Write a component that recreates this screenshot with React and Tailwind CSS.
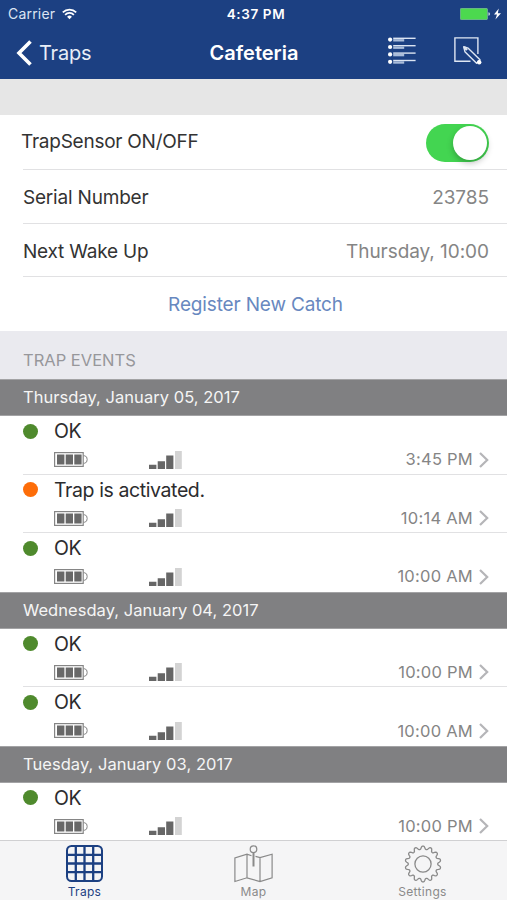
import React from "react";
import clsx from "clsx";

const details = [
  { label: "Serial Number", value: "23785" },
  { label: "Next Wake Up", value: "Thursday, 10:00" },
];

const eventDays = [
  {
    date: "Thursday, January 05, 2017",
    events: [
      { title: "OK", time: "3:45 PM" },
      { title: "Trap is activated.", time: "10:14 AM", activated: true },
      { title: "OK", time: "10:00 AM" },
    ],
  },
  {
    date: "Wednesday, January 04, 2017",
    events: [
      { title: "OK", time: "10:00 PM" },
      { title: "OK", time: "10:00 AM" },
    ],
  },
  {
    date: "Tuesday, January 03, 2017",
    events: [{ title: "OK", time: "10:00 PM" }],
  },
];

const WifiIcon = () => (
  <svg className="w-[15px] h-3" viewBox="0 0 15 12" fill="none" stroke="white" strokeWidth="1.7">
    <path d="M.8 4.3a9.5 9.5 0 0113.4 0M3.1 6.8a6.2 6.2 0 018.8 0" />
    <path d="M7.5 11.2L5.1 8.8a3.4 3.4 0 014.8 0z" fill="white" stroke="none" />
  </svg>
);

const BatteryChargingIcon = () => (
  <svg className="w-[42px] h-3" viewBox="0 0 42 12">
    <rect x=".3" y=".3" width="27.2" height="11.4" rx="1.2" fill="#4cd94f" stroke="#a0bfc0" strokeWidth=".5" />
    <path d="M28.4 4.2q1.7.3 1.7 1.8t-1.7 1.8z" fill="#b9d3d8" />
    <path d="M38.8 0.4L34 6.6h3L35.4 11.6 41 5.3h-3.2z" fill="white" />
  </svg>
);

const ListIcon = () => (
  <svg className="w-7 h-7" viewBox="0 0 28 28">
    {[0, 7.4, 14.8, 22.2].map((y) => (
      <g key={y} transform={`translate(0 ${y})`}>
        <circle cx="2.1" cy="2.6" r="2.1" fill="white" />
        <path d="M5.2 1.3h22.4" stroke="#dbe4f2" strokeWidth="1.4" />
        <path d="M5.2 3.3h11" stroke="#a9bcda" strokeWidth="2.4" />
      </g>
    ))}
  </svg>
);

const EditIcon = () => (
  <svg className="w-7 h-7" viewBox="0 0 28 28" fill="none" stroke="#dfe7f3" strokeWidth="1.4">
    <path d="M16.5 24.2H.9V.9h23v16" />
    <path d="M9.7 9.7l1.2 5L22.6 26.2l3.4-3.4L14.2 11.2z" strokeLinejoin="round" />
    <path d="M10 10l3 3" strokeWidth="2.4" />
    <circle cx="25.2" cy="25.2" r="2.2" fill="white" stroke="none" />
  </svg>
);

const BatteryIcon = () => (
  <svg className="w-[34px] h-[15px]" viewBox="0 0 34 15" fill="none">
    <rect x=".6" y=".6" width="28.6" height="13.8" stroke="#858585" strokeWidth="1.2" />
    <path d="M29.5 3.8h1.3q2.4.4 2.4 3.7t-2.4 3.7h-1.3" stroke="#858585" />
    <path d="M3 2.6h7.4v9.8H3zM11.7 2.6H19v9.8h-7.3zM20.3 2.6h7.3v9.8h-7.3z" fill="#686868" />
  </svg>
);

const SignalIcon = () => (
  <svg className="w-[34px] h-[18px]" viewBox="0 0 34 18" fill="#666">
    <path d="M0 13.8h7.4V18H0zM8.7 10.2h7.3V18H8.7zM17.2 4.4h7.2V18h-7.2z" />
    <path d="M26 0h6.8v18H26z" fill="#d3d3d3" />
  </svg>
);

const GridIcon = () => (
  <svg className="w-[37px] h-[37px]" viewBox="0 0 37 37" fill="none" stroke="#1c4082">
    <rect x="1" y="1" width="35" height="35" rx="4.5" strokeWidth="2" />
    <path d="M9.8 1v35M18.5 1v35M27.2 1v35M1 9.8h35M1 18.5h35M1 27.2h35" strokeWidth="2.3" />
  </svg>
);

const MapIcon = () => (
  <svg className="w-[39px] h-[38px]" viewBox="0 0 39 38" fill="none" stroke="#8a8a8a" strokeWidth="1.2">
    <path d="M17.5 10.8L13 9.2.9 13v23.5L13 32.8l13 3.7 12.1-3.7V9.2L26 12.6l-4.5-1.2M13 9.2v23.6M26 12.6v23.9" />
    <circle cx="19.5" cy="4.2" r="3.3" />
    <path d="M19.5 7.5v14" strokeWidth="2" />
  </svg>
);

// 14 rounded teeth around the rim
const gearPath = Array.from({ length: 169 }, (_, i) => {
  const angle = (i / 168) * Math.PI * 2;
  const r = 16.3 + 1.7 * Math.tanh(1.6 * Math.cos(angle * 14));
  return `${i ? "L" : "M"}${(19 + r * Math.sin(angle)).toFixed(2)} ${(19 - r * Math.cos(angle)).toFixed(2)}`;
}).join("");

const GearIcon = () => (
  <svg className="w-[38px] h-[38px]" viewBox="0 0 38 38" fill="none" stroke="#8a8a8a" strokeWidth="1.3">
    <path d={gearPath} />
    <circle cx="19" cy="19" r="8.1" />
  </svg>
);

const tabs = [
  { label: "Traps", icon: GridIcon, active: true },
  { label: "Map", icon: MapIcon },
  { label: "Settings", icon: GearIcon },
];

const Header = () => (
  <header className="h-[79px] shrink-0 bg-[#1c4082] text-white">
    <div className="grid grid-cols-3 items-center h-[27px] pl-2 pr-[5px]">
      <div className="flex items-center gap-[7px] text-[14px] text-[#dbe4f3]">
        <span className="tracking-[0.2px]">Carrier</span>
        <WifiIcon />
      </div>
      <span className="text-center text-[13.5px] font-semibold tracking-[0.6px] pt-0.5 pl-0.5">4:37 PM</span>
      <div className="flex justify-end">
        <BatteryChargingIcon />
      </div>
    </div>
    <div className="grid grid-cols-3 items-center h-[51px] pl-4 pr-[25px]">
      <button className="flex items-center gap-[7px] text-[20px] tracking-[-0.2px] text-[#e8eef8]">
        <svg className="w-4 h-[26px]" viewBox="0 0 16 26" fill="none" stroke="white" strokeWidth="3.6">
          <path d="M14.5 1.5L3 13l11.5 11.5" />
        </svg>
        Traps
      </button>
      <h1 className="text-center text-[20px] font-semibold pl-[10px]">Cafeteria</h1>
      <div className="flex justify-end gap-[38px] pb-1">
        <ListIcon />
        <EditIcon />
      </div>
    </div>
  </header>
);

const EventRow = ({ event, last }) => (
  <div className="flex h-[58.6px] pl-[23px]">
    <div className={clsx("flex flex-1 border-b", last ? "border-transparent" : "border-[#e1e1e3]")}>
      <span
        className={clsx(
          "w-[15px] h-[15px] mt-[7.5px] rounded-full shrink-0",
          event.activated ? "bg-[#fd6d09]" : "bg-[#4f8a2d]"
        )}
      />
      <div className="flex-1 pl-4">
        <p className="h-[31px] leading-[31px] text-[19.5px] tracking-[-0.4px] text-[#2c2c2e]">{event.title}</p>
        <div className="flex items-center h-[25px]">
          <BatteryIcon />
          <div className="pl-[61px]">
            <SignalIcon />
          </div>
          <span className="ml-auto text-[16.5px] tracking-[0.25px] text-[#858585]">{event.time}</span>
          <svg className="w-[10px] h-4 ml-[6px] mr-[18px]" viewBox="0 0 10 16" fill="none" stroke="#b5b5b8" strokeWidth="2.2">
            <path d="M1 1l7.2 7L1 15" />
          </svg>
        </div>
      </div>
    </div>
  </div>
);

const App = () => {
  return (
    <div className="flex flex-col w-[507px] h-[900px] overflow-hidden bg-white font-['Inter',sans-serif]">
      <Header />
      <div className="h-9 shrink-0 bg-[#e6e6e6]" />

      {/* Trap settings */}
      <section className="h-[216px] shrink-0 text-[19px] text-[#333]">
        <div className="flex items-center h-[55px] ml-[23px] pr-[18px] border-b border-[#e1e1e3]">
          <span className="-ml-0.5 tracking-[-0.25px]">TrapSensor ON/OFF</span>
          <button className="flex justify-end ml-auto mt-px w-[63px] h-[38px] p-0.5 rounded-full bg-[#43d551]">
            <span className="w-[34px] h-[34px] rounded-full bg-white shadow-[0_3px_6px_rgba(0,0,0,0.25)]" />
          </button>
        </div>
        {details.map((item) => (
          <div
            key={item.label}
            className="flex items-center justify-between h-[53.6px] ml-[23px] pt-1 pr-[18px] border-b border-[#e1e1e3]"
          >
            <span className="tracking-[-0.2px]">{item.label}</span>
            <span className="tracking-[-0.05px] text-[#858585]">{item.value}</span>
          </div>
        ))}
        <button className="w-full h-[53px] pt-[3px] pl-1 text-center tracking-[-0.15px] text-[#6888c0]">
          Register New Catch
        </button>
      </section>

      {/* Trap events */}
      <section className="flex-1 min-h-0 overflow-hidden">
        <h2 className="h-12 pt-[17px] pl-[23px] bg-[#eaeaef] text-[16.5px] text-[#97979b]">TRAP EVENTS</h2>
        {eventDays.map((day) => (
          <div key={day.date}>
            <h3 className="h-[37px] leading-[35px] pl-[23px] bg-[#808082] border-y border-[#a3a3a5] text-[16.5px] tracking-[0.04px] text-[#f5f5f5]">
              {day.date}
            </h3>
            {day.events.map((event, i) => (
              <EventRow key={i} event={event} last={i === day.events.length - 1} />
            ))}
          </div>
        ))}
      </section>

      <nav className="grid grid-cols-3 h-[60px] shrink-0 border-t border-[#d0d0d2] bg-[#f5f5f6]">
        {tabs.map(({ label, icon: Icon, active }) => (
          <button
            key={label}
            className={clsx(
              "flex flex-col items-center pt-1 text-[12px] tracking-[0.3px]",
              active ? "text-[#1c4082]" : "text-[#8a8a8a]"
            )}
          >
            <span className="h-[38px]">
              <Icon />
            </span>
            <span className="leading-[17px]">{label}</span>
          </button>
        ))}
      </nav>
    </div>
  );
};

export default App;
